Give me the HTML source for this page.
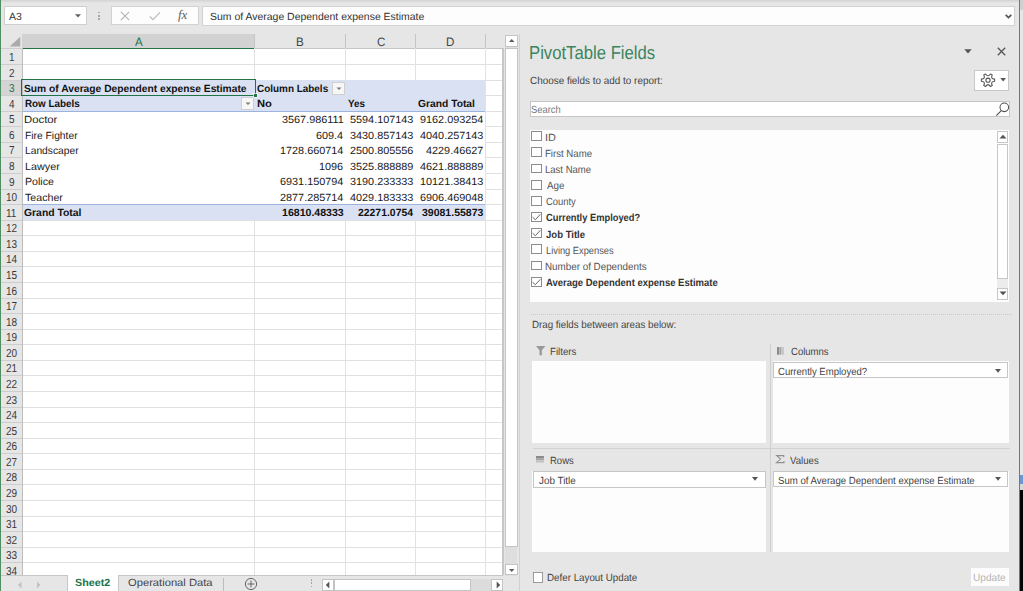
<!DOCTYPE html>
<html><head><meta charset="utf-8"><style>
html,body{margin:0;padding:0;}
body{width:1023px;height:591px;overflow:hidden;position:relative;background:#e6e6e6;font-family:"Liberation Sans", sans-serif;text-rendering:geometricPrecision;}
body>div{position:absolute;}
.t{white-space:nowrap;line-height:1em;transform-origin:0 0;}
</style></head><body>
<div style="left:0px;top:0px;width:1023px;height:3px;background:linear-gradient(#d2d2d2,#e6e6e6)"></div>
<div style="left:4.4px;top:6.3px;width:82.2px;height:18.9px;background:#fff;border:1px solid #cfcfcf;box-sizing:border-box"></div>
<div class="t" style="left:8.96px;top:13px;font-size:10.4px;transform:scaleX(1.0066);color:#333">A3</div>
<svg style="position:absolute;left:75px;top:14px;overflow:visible" width="6" height="4"><path d="M0 0.3H6L3 3.5Z" fill="#606060"/></svg>
<div style="left:98.3px;top:11.8px;width:1.6px;height:1.6px;background:#a6a6a6"></div>
<div style="left:98.3px;top:15.0px;width:1.6px;height:1.6px;background:#a6a6a6"></div>
<div style="left:98.3px;top:18.200000000000003px;width:1.6px;height:1.6px;background:#a6a6a6"></div>
<div style="left:111.2px;top:6.4px;width:88.1px;height:19.1px;background:#fdfdfd;border:1px solid #d2d2d2;box-sizing:border-box"></div>
<svg style="position:absolute;left:120px;top:11px;overflow:visible" width="10" height="10"><path d="M0.8 0.8L9.2 9.2M9.2 0.8L0.8 9.2" stroke="#b4b4b4" stroke-width="1.1"/></svg>
<svg style="position:absolute;left:149px;top:11px;overflow:visible" width="12" height="10"><path d="M0.8 5.5L4 8.6L11 1.4" stroke="#bcbcbc" stroke-width="1.3" fill="none"/></svg>
<div class="t" style="left:178px;top:8px;font-size:13px;font-family:'Liberation Serif',serif;font-style:italic;color:#606060;line-height:14px">fx</div>
<div style="left:201.5px;top:6.4px;width:813.3px;height:19.2px;background:#fdfdfd;border:1px solid #d2d2d2;box-sizing:border-box"></div>
<div class="t" style="left:210.34px;top:13px;font-size:10.4px;transform:scaleX(1.0063);color:#333">Sum of Average Dependent expense Estimate</div>
<svg style="position:absolute;left:1005px;top:13.5px;overflow:visible" width="7" height="5"><path d="M0.7 0.8L3.5 3.6L6.3 0.8" stroke="#555" stroke-width="1.7" fill="none"/></svg>
<div style="left:1020px;top:0px;width:3px;height:591px;background:#e6e6e6"></div>
<div style="left:1020px;top:0px;width:3px;height:10px;background:#cfcfcf"></div>
<div style="left:1020px;top:475px;width:3px;height:9px;background:#6b98d2"></div>
<div style="left:1020px;top:484px;width:3px;height:6px;background:#d8d8d8"></div>
<div style="left:1020px;top:490px;width:3px;height:101px;background:#050505"></div>
<div style="left:1019px;top:0px;width:1.2px;height:591px;background:#4f8d62"></div>
<div style="left:0px;top:0px;width:1.2px;height:591px;background:#4f8d62"></div>
<div style="left:22.3px;top:48.4px;width:480.7px;height:527.0px;background:#fff"></div>
<div style="left:1.2px;top:48.4px;width:21.1px;height:527.0px;background:#e6e6e6"></div>
<div style="left:1.2px;top:79.53999999999999px;width:21.1px;height:15.57px;background:#d4d4d4"></div>
<div style="left:22.3px;top:34px;width:480.7px;height:14.399999999999999px;background:#e6e6e6"></div>
<div style="left:22.3px;top:34px;width:232.29999999999998px;height:14.399999999999999px;background:#d2d2d2"></div>
<div style="left:254.1px;top:34px;width:1px;height:14.399999999999999px;background:#c4c4c4"></div>
<div style="left:344.8px;top:34px;width:1px;height:14.399999999999999px;background:#c4c4c4"></div>
<div style="left:415.0px;top:34px;width:1px;height:14.399999999999999px;background:#c4c4c4"></div>
<div style="left:484.9px;top:34px;width:1px;height:14.399999999999999px;background:#c4c4c4"></div>
<div style="left:1.2px;top:47.8px;width:21.1px;height:1px;background:#cdcdcd"></div>
<div style="left:254.6px;top:47.8px;width:248.4px;height:1px;background:#c4c4c4"></div>
<div style="left:22.3px;top:47.6px;width:232.29999999999998px;height:1.6px;background:#217346"></div>
<svg style="position:absolute;left:9px;top:36px;overflow:visible" width="12" height="11"><path d="M0.8 10.6H11.2V0.7Z" fill="#ababab"/></svg>
<div style="left:22.0px;top:48.4px;width:0.9px;height:527.0px;background:#bdbdbd"></div>
<div class="t" style="left:134.97px;top:36px;font-size:12.2px;transform:scaleX(0.9500);color:#217346">A</div>
<div class="t" style="left:296.32px;top:36px;font-size:12.2px;transform:scaleX(0.9500);color:#444">B</div>
<div class="t" style="left:376.57px;top:36px;font-size:12.2px;transform:scaleX(0.9500);color:#444">C</div>
<div class="t" style="left:446.47px;top:36px;font-size:12.2px;transform:scaleX(0.9500);color:#444">D</div>
<div style="left:1.2px;top:63.97px;width:21.1px;height:1px;background:#cdcdcd"></div>
<div style="left:22.9px;top:63.97px;width:480.1px;height:1px;background:#e0e0e0"></div>
<div style="left:1.2px;top:79.53999999999999px;width:21.1px;height:1px;background:#cdcdcd"></div>
<div style="left:22.9px;top:79.53999999999999px;width:480.1px;height:1px;background:#e0e0e0"></div>
<div style="left:1.2px;top:95.11px;width:21.1px;height:1px;background:#cdcdcd"></div>
<div style="left:22.9px;top:95.11px;width:480.1px;height:1px;background:#e0e0e0"></div>
<div style="left:1.2px;top:110.68px;width:21.1px;height:1px;background:#cdcdcd"></div>
<div style="left:22.9px;top:110.68px;width:480.1px;height:1px;background:#e0e0e0"></div>
<div style="left:1.2px;top:126.25px;width:21.1px;height:1px;background:#cdcdcd"></div>
<div style="left:22.9px;top:126.25px;width:480.1px;height:1px;background:#e0e0e0"></div>
<div style="left:1.2px;top:141.82px;width:21.1px;height:1px;background:#cdcdcd"></div>
<div style="left:22.9px;top:141.82px;width:480.1px;height:1px;background:#e0e0e0"></div>
<div style="left:1.2px;top:157.39000000000001px;width:21.1px;height:1px;background:#cdcdcd"></div>
<div style="left:22.9px;top:157.39000000000001px;width:480.1px;height:1px;background:#e0e0e0"></div>
<div style="left:1.2px;top:172.96px;width:21.1px;height:1px;background:#cdcdcd"></div>
<div style="left:22.9px;top:172.96px;width:480.1px;height:1px;background:#e0e0e0"></div>
<div style="left:1.2px;top:188.53px;width:21.1px;height:1px;background:#cdcdcd"></div>
<div style="left:22.9px;top:188.53px;width:480.1px;height:1px;background:#e0e0e0"></div>
<div style="left:1.2px;top:204.1px;width:21.1px;height:1px;background:#cdcdcd"></div>
<div style="left:22.9px;top:204.1px;width:480.1px;height:1px;background:#e0e0e0"></div>
<div style="left:1.2px;top:219.67000000000002px;width:21.1px;height:1px;background:#cdcdcd"></div>
<div style="left:22.9px;top:219.67000000000002px;width:480.1px;height:1px;background:#e0e0e0"></div>
<div style="left:1.2px;top:235.24px;width:21.1px;height:1px;background:#cdcdcd"></div>
<div style="left:22.9px;top:235.24px;width:480.1px;height:1px;background:#e0e0e0"></div>
<div style="left:1.2px;top:250.81px;width:21.1px;height:1px;background:#cdcdcd"></div>
<div style="left:22.9px;top:250.81px;width:480.1px;height:1px;background:#e0e0e0"></div>
<div style="left:1.2px;top:266.38px;width:21.1px;height:1px;background:#cdcdcd"></div>
<div style="left:22.9px;top:266.38px;width:480.1px;height:1px;background:#e0e0e0"></div>
<div style="left:1.2px;top:281.95px;width:21.1px;height:1px;background:#cdcdcd"></div>
<div style="left:22.9px;top:281.95px;width:480.1px;height:1px;background:#e0e0e0"></div>
<div style="left:1.2px;top:297.52px;width:21.1px;height:1px;background:#cdcdcd"></div>
<div style="left:22.9px;top:297.52px;width:480.1px;height:1px;background:#e0e0e0"></div>
<div style="left:1.2px;top:313.09px;width:21.1px;height:1px;background:#cdcdcd"></div>
<div style="left:22.9px;top:313.09px;width:480.1px;height:1px;background:#e0e0e0"></div>
<div style="left:1.2px;top:328.65999999999997px;width:21.1px;height:1px;background:#cdcdcd"></div>
<div style="left:22.9px;top:328.65999999999997px;width:480.1px;height:1px;background:#e0e0e0"></div>
<div style="left:1.2px;top:344.22999999999996px;width:21.1px;height:1px;background:#cdcdcd"></div>
<div style="left:22.9px;top:344.22999999999996px;width:480.1px;height:1px;background:#e0e0e0"></div>
<div style="left:1.2px;top:359.79999999999995px;width:21.1px;height:1px;background:#cdcdcd"></div>
<div style="left:22.9px;top:359.79999999999995px;width:480.1px;height:1px;background:#e0e0e0"></div>
<div style="left:1.2px;top:375.37px;width:21.1px;height:1px;background:#cdcdcd"></div>
<div style="left:22.9px;top:375.37px;width:480.1px;height:1px;background:#e0e0e0"></div>
<div style="left:1.2px;top:390.94px;width:21.1px;height:1px;background:#cdcdcd"></div>
<div style="left:22.9px;top:390.94px;width:480.1px;height:1px;background:#e0e0e0"></div>
<div style="left:1.2px;top:406.51px;width:21.1px;height:1px;background:#cdcdcd"></div>
<div style="left:22.9px;top:406.51px;width:480.1px;height:1px;background:#e0e0e0"></div>
<div style="left:1.2px;top:422.08px;width:21.1px;height:1px;background:#cdcdcd"></div>
<div style="left:22.9px;top:422.08px;width:480.1px;height:1px;background:#e0e0e0"></div>
<div style="left:1.2px;top:437.65px;width:21.1px;height:1px;background:#cdcdcd"></div>
<div style="left:22.9px;top:437.65px;width:480.1px;height:1px;background:#e0e0e0"></div>
<div style="left:1.2px;top:453.21999999999997px;width:21.1px;height:1px;background:#cdcdcd"></div>
<div style="left:22.9px;top:453.21999999999997px;width:480.1px;height:1px;background:#e0e0e0"></div>
<div style="left:1.2px;top:468.78999999999996px;width:21.1px;height:1px;background:#cdcdcd"></div>
<div style="left:22.9px;top:468.78999999999996px;width:480.1px;height:1px;background:#e0e0e0"></div>
<div style="left:1.2px;top:484.36px;width:21.1px;height:1px;background:#cdcdcd"></div>
<div style="left:22.9px;top:484.36px;width:480.1px;height:1px;background:#e0e0e0"></div>
<div style="left:1.2px;top:499.93px;width:21.1px;height:1px;background:#cdcdcd"></div>
<div style="left:22.9px;top:499.93px;width:480.1px;height:1px;background:#e0e0e0"></div>
<div style="left:1.2px;top:515.5px;width:21.1px;height:1px;background:#cdcdcd"></div>
<div style="left:22.9px;top:515.5px;width:480.1px;height:1px;background:#e0e0e0"></div>
<div style="left:1.2px;top:531.07px;width:21.1px;height:1px;background:#cdcdcd"></div>
<div style="left:22.9px;top:531.07px;width:480.1px;height:1px;background:#e0e0e0"></div>
<div style="left:1.2px;top:546.64px;width:21.1px;height:1px;background:#cdcdcd"></div>
<div style="left:22.9px;top:546.64px;width:480.1px;height:1px;background:#e0e0e0"></div>
<div style="left:1.2px;top:562.21px;width:21.1px;height:1px;background:#cdcdcd"></div>
<div style="left:22.9px;top:562.21px;width:480.1px;height:1px;background:#e0e0e0"></div>
<div style="left:254.1px;top:48.4px;width:1px;height:527.0px;background:#e2e2e2"></div>
<div style="left:344.8px;top:48.4px;width:1px;height:527.0px;background:#e2e2e2"></div>
<div style="left:415.0px;top:48.4px;width:1px;height:527.0px;background:#e2e2e2"></div>
<div style="left:484.9px;top:48.4px;width:1px;height:527.0px;background:#e2e2e2"></div>
<div style="left:502.3px;top:48.4px;width:1.6px;height:527.0px;background:#c6c6c6"></div>
<div class="t" style="left:8.81px;top:52px;font-size:11.6px;transform:scaleX(0.8600);color:#383838">1</div>
<div class="t" style="left:8.93px;top:68px;font-size:11.6px;transform:scaleX(0.8600);color:#383838">2</div>
<div class="t" style="left:8.96px;top:83px;font-size:11.6px;transform:scaleX(0.8600);color:#217346">3</div>
<div class="t" style="left:8.96px;top:99px;font-size:11.6px;transform:scaleX(0.8600);color:#383838">4</div>
<div class="t" style="left:8.93px;top:114px;font-size:11.6px;transform:scaleX(0.8600);color:#383838">5</div>
<div class="t" style="left:8.91px;top:130px;font-size:11.6px;transform:scaleX(0.8600);color:#383838">6</div>
<div class="t" style="left:8.93px;top:145px;font-size:11.6px;transform:scaleX(0.8600);color:#383838">7</div>
<div class="t" style="left:8.91px;top:161px;font-size:11.6px;transform:scaleX(0.8600);color:#383838">8</div>
<div class="t" style="left:8.93px;top:177px;font-size:11.6px;transform:scaleX(0.8600);color:#383838">9</div>
<div class="t" style="left:5.99px;top:192px;font-size:11.6px;transform:scaleX(0.8600);color:#383838">10</div>
<div class="t" style="left:6.41px;top:208px;font-size:11.6px;transform:scaleX(0.8600);color:#383838">11</div>
<div class="t" style="left:6.04px;top:223px;font-size:11.6px;transform:scaleX(0.8600);color:#383838">12</div>
<div class="t" style="left:6.01px;top:239px;font-size:11.6px;transform:scaleX(0.8600);color:#383838">13</div>
<div class="t" style="left:5.94px;top:254px;font-size:11.6px;transform:scaleX(0.8600);color:#383838">14</div>
<div class="t" style="left:5.99px;top:270px;font-size:11.6px;transform:scaleX(0.8600);color:#383838">15</div>
<div class="t" style="left:6.01px;top:286px;font-size:11.6px;transform:scaleX(0.8600);color:#383838">16</div>
<div class="t" style="left:6.04px;top:301px;font-size:11.6px;transform:scaleX(0.8600);color:#383838">17</div>
<div class="t" style="left:5.99px;top:317px;font-size:11.6px;transform:scaleX(0.8600);color:#383838">18</div>
<div class="t" style="left:6.01px;top:332px;font-size:11.6px;transform:scaleX(0.8600);color:#383838">19</div>
<div class="t" style="left:6.11px;top:348px;font-size:11.6px;transform:scaleX(0.8600);color:#383838">20</div>
<div class="t" style="left:6.16px;top:363px;font-size:11.6px;transform:scaleX(0.8600);color:#383838">21</div>
<div class="t" style="left:6.16px;top:379px;font-size:11.6px;transform:scaleX(0.8600);color:#383838">22</div>
<div class="t" style="left:6.14px;top:395px;font-size:11.6px;transform:scaleX(0.8600);color:#383838">23</div>
<div class="t" style="left:6.06px;top:410px;font-size:11.6px;transform:scaleX(0.8600);color:#383838">24</div>
<div class="t" style="left:6.11px;top:426px;font-size:11.6px;transform:scaleX(0.8600);color:#383838">25</div>
<div class="t" style="left:6.14px;top:441px;font-size:11.6px;transform:scaleX(0.8600);color:#383838">26</div>
<div class="t" style="left:6.16px;top:457px;font-size:11.6px;transform:scaleX(0.8600);color:#383838">27</div>
<div class="t" style="left:6.11px;top:472px;font-size:11.6px;transform:scaleX(0.8600);color:#383838">28</div>
<div class="t" style="left:6.14px;top:488px;font-size:11.6px;transform:scaleX(0.8600);color:#383838">29</div>
<div class="t" style="left:6.16px;top:504px;font-size:11.6px;transform:scaleX(0.8600);color:#383838">30</div>
<div class="t" style="left:6.21px;top:519px;font-size:11.6px;transform:scaleX(0.8600);color:#383838">31</div>
<div class="t" style="left:6.21px;top:535px;font-size:11.6px;transform:scaleX(0.8600);color:#383838">32</div>
<div class="t" style="left:6.19px;top:550px;font-size:11.6px;transform:scaleX(0.8600);color:#383838">33</div>
<div class="t" style="left:6.11px;top:566px;font-size:11.6px;transform:scaleX(0.8600);color:#383838">34</div>
<div style="left:22.9px;top:79.53999999999999px;width:462.5px;height:31.14px;background:#d9e1f2"></div>
<div style="left:22.9px;top:110.68px;width:462.5px;height:93.42px;background:#fff"></div>
<div style="left:22.9px;top:204.1px;width:462.5px;height:15.57px;background:#d9e1f2"></div>
<div style="left:22.9px;top:110.78px;width:462.5px;height:1px;background:#9bb3dd"></div>
<div style="left:22.9px;top:204.0px;width:462.5px;height:1px;background:#9bb3dd"></div>
<div class="t" style="left:24.40px;top:85px;font-size:10.4px;transform:scaleX(0.9865);font-weight:bold;color:#111">Sum of Average Dependent expense Estimate</div>
<div class="t" style="left:257.20px;top:85px;font-size:10.4px;transform:scaleX(0.9554);font-weight:bold;color:#111">Column Labels</div>
<div class="t" style="left:24.71px;top:100px;font-size:10.4px;transform:scaleX(0.9470);font-weight:bold;color:#111">Row Labels</div>
<div class="t" style="left:256.69px;top:100px;font-size:10.4px;transform:scaleX(1.0774);font-weight:bold;color:#111">No</div>
<div class="t" style="left:347.55px;top:100px;font-size:10.4px;transform:scaleX(0.9497);font-weight:bold;color:#111">Yes</div>
<div class="t" style="left:417.83px;top:100px;font-size:10.4px;transform:scaleX(0.9899);font-weight:bold;color:#111">Grand Total</div>
<div class="t" style="left:24.49px;top:116px;font-size:10.4px;transform:scaleX(1.0901);color:#1a1a1a">Doctor</div>
<div class="t" style="left:281.57px;top:116px;font-size:10.4px;transform:scaleX(1.0440);color:#1a1a1a">3567.986111</div>
<div class="t" style="left:350.08px;top:116px;font-size:10.4px;transform:scaleX(1.0440);color:#1a1a1a">5594.107143</div>
<div class="t" style="left:419.72px;top:116px;font-size:10.4px;transform:scaleX(1.0440);color:#1a1a1a">9162.093254</div>
<div class="t" style="left:24.78px;top:132px;font-size:10.4px;transform:scaleX(0.9897);color:#1a1a1a">Fire Fighter</div>
<div class="t" style="left:315.98px;top:132px;font-size:10.4px;transform:scaleX(1.0440);color:#1a1a1a">609.4</div>
<div class="t" style="left:350.08px;top:132px;font-size:10.4px;transform:scaleX(1.0440);color:#1a1a1a">3430.857143</div>
<div class="t" style="left:419.88px;top:132px;font-size:10.4px;transform:scaleX(1.0440);color:#1a1a1a">4040.257143</div>
<div class="t" style="left:24.79px;top:147px;font-size:10.4px;transform:scaleX(0.9861);color:#1a1a1a">Landscaper</div>
<div class="t" style="left:279.72px;top:147px;font-size:10.4px;transform:scaleX(1.0440);color:#1a1a1a">1728.660714</div>
<div class="t" style="left:350.08px;top:147px;font-size:10.4px;transform:scaleX(1.0440);color:#1a1a1a">2500.805556</div>
<div class="t" style="left:426.02px;top:147px;font-size:10.4px;transform:scaleX(1.0440);color:#1a1a1a">4229.46627</div>
<div class="t" style="left:24.59px;top:163px;font-size:10.4px;transform:scaleX(1.0382);color:#1a1a1a">Lawyer</div>
<div class="t" style="left:319.13px;top:163px;font-size:10.4px;transform:scaleX(1.0440);color:#1a1a1a">1096</div>
<div class="t" style="left:350.08px;top:163px;font-size:10.4px;transform:scaleX(1.0440);color:#1a1a1a">3525.888889</div>
<div class="t" style="left:419.88px;top:163px;font-size:10.4px;transform:scaleX(1.0440);color:#1a1a1a">4621.888889</div>
<div class="t" style="left:24.58px;top:178px;font-size:10.4px;transform:scaleX(1.0205);color:#1a1a1a">Police</div>
<div class="t" style="left:279.72px;top:178px;font-size:10.4px;transform:scaleX(1.0440);color:#1a1a1a">6931.150794</div>
<div class="t" style="left:350.08px;top:178px;font-size:10.4px;transform:scaleX(1.0440);color:#1a1a1a">3190.233333</div>
<div class="t" style="left:419.88px;top:178px;font-size:10.4px;transform:scaleX(1.0440);color:#1a1a1a">10121.38413</div>
<div class="t" style="left:25.02px;top:194px;font-size:10.4px;transform:scaleX(1.0254);color:#1a1a1a">Teacher</div>
<div class="t" style="left:279.72px;top:194px;font-size:10.4px;transform:scaleX(1.0440);color:#1a1a1a">2877.285714</div>
<div class="t" style="left:350.08px;top:194px;font-size:10.4px;transform:scaleX(1.0440);color:#1a1a1a">4029.183333</div>
<div class="t" style="left:419.83px;top:194px;font-size:10.4px;transform:scaleX(1.0440);color:#1a1a1a">6906.469048</div>
<div class="t" style="left:24.37px;top:209px;font-size:10.4px;transform:scaleX(0.9988);font-weight:bold;color:#111">Grand Total</div>
<div class="t" style="left:281.76px;top:209px;font-size:10.4px;transform:scaleX(1.0177);font-weight:bold;color:#111">16810.48333</div>
<div class="t" style="left:357.76px;top:209px;font-size:10.4px;transform:scaleX(1.0018);font-weight:bold;color:#111">22271.0754</div>
<div class="t" style="left:422.01px;top:209px;font-size:10.4px;transform:scaleX(1.0111);font-weight:bold;color:#111">39081.55873</div>
<div style="left:332px;top:81.8px;width:13px;height:12.8px;background:#f7f7f7;border:1px solid #d0d0d0;box-sizing:border-box"></div>
<svg style="position:absolute;left:335.5px;top:86.7px;overflow:visible" width="6" height="4"><path d="M0.5 0.5H5.5L3 3Z" fill="#7a7a7a"/></svg>
<div style="left:241.3px;top:96.8px;width:12.9px;height:13.0px;background:#f7f7f7;border:1px solid #d0d0d0;box-sizing:border-box"></div>
<svg style="position:absolute;left:244.75px;top:101.8px;overflow:visible" width="6" height="4"><path d="M0.5 0.5H5.5L3 3Z" fill="#7a7a7a"/></svg>
<div style="left:21.4px;top:78.7px;width:234.8px;height:17.6px;border:1.6px solid #217346;box-sizing:border-box"></div>
<div style="left:253.5px;top:94px;width:3.2px;height:3.2px;background:#217346;box-shadow:0 0 0 0.6px #fff"></div>
<div style="left:505.4px;top:34.5px;width:12px;height:541px;background:#dedede"></div>
<div style="left:505.2px;top:35.3px;width:12.5px;height:11.5px;background:#fff;border:1px solid #c4c4c4;box-sizing:border-box"></div>
<svg style="position:absolute;left:508.8px;top:39px;overflow:visible" width="6" height="4"><path d="M0 3H5.4L2.7 0Z" fill="#5a5a5a"/></svg>
<div style="left:505.2px;top:47.8px;width:12.5px;height:499.6px;background:#fff;border:1px solid #c4c4c4;box-sizing:border-box"></div>
<div style="left:505.2px;top:564.2px;width:12.5px;height:11.3px;background:#fff;border:1px solid #c4c4c4;box-sizing:border-box"></div>
<svg style="position:absolute;left:508.8px;top:568.5px;overflow:visible" width="6" height="4"><path d="M0 0H5.4L2.7 3Z" fill="#5a5a5a"/></svg>
<div style="left:518.6px;top:34px;width:1.2px;height:557px;background:#d2d2d2"></div>
<div style="left:1.2px;top:575.4px;width:503px;height:15.600000000000023px;background:#e6e6e6"></div>
<div style="left:1.2px;top:575.0px;width:65.9px;height:1px;background:#c6c6c6"></div>
<svg style="position:absolute;left:17px;top:581px;overflow:visible" width="6" height="8"><path d="M4.5 0.5L1 4L4.5 7.5Z" fill="#c2c2c2"/></svg>
<svg style="position:absolute;left:36px;top:581px;overflow:visible" width="6" height="8"><path d="M1 0.5L4.5 4L1 7.5Z" fill="#c2c2c2"/></svg>
<div style="left:66.9px;top:575.4px;width:51.5px;height:16px;background:#fff;border-left:1px solid #c6c6c6;box-sizing:border-box"></div>
<div class="t" style="left:75.30px;top:579px;font-size:10.4px;transform:scaleX(1.0331);font-weight:bold;color:#217346">Sheet2</div>
<div style="left:118.2px;top:575.0px;width:385px;height:1px;background:#c6c6c6"></div>
<div style="left:118.2px;top:575.0px;width:1px;height:16px;background:#c6c6c6"></div>
<div class="t" style="left:128.44px;top:579px;font-size:10.4px;transform:scaleX(1.0760);color:#444">Operational Data</div>
<div style="left:223.3px;top:578px;width:1px;height:13px;background:#bdbdbd"></div>
<svg style="position:absolute;left:244px;top:577px;overflow:visible" width="14" height="14"><circle cx="7" cy="7" r="5.6" stroke="#666" stroke-width="1" fill="none"/><path d="M7 3.6V10.4M3.6 7H10.4" stroke="#666" stroke-width="1"/></svg>
<div style="left:310.5px;top:579.3px;width:1.6px;height:1.6px;background:#a4a4a4"></div>
<div style="left:310.5px;top:582.4px;width:1.6px;height:1.6px;background:#a4a4a4"></div>
<div style="left:310.5px;top:585.5px;width:1.6px;height:1.6px;background:#a4a4a4"></div>
<div style="left:321.8px;top:578.8px;width:12.2px;height:12.2px;background:#fff;border:1px solid #c4c4c4;box-sizing:border-box"></div>
<svg style="position:absolute;left:325.3px;top:581px;overflow:visible" width="5" height="8"><path d="M4.3 0.5V7.5L0.8 4Z" fill="#555"/></svg>
<div style="left:333.8px;top:578.8px;width:137px;height:12.2px;background:#fff;border:1px solid #c4c4c4;box-sizing:border-box"></div>
<div style="left:470.8px;top:578.8px;width:20.6px;height:12.2px;background:#dcdcdc"></div>
<div style="left:491.3px;top:578.8px;width:12px;height:12.2px;background:#fff;border:1px solid #c4c4c4;box-sizing:border-box"></div>
<svg style="position:absolute;left:495.5px;top:581px;overflow:visible" width="5" height="8"><path d="M0.7 0.5V7.5L4.2 4Z" fill="#555"/></svg>
<div class="t" style="left:529.23px;top:44px;font-size:18.8px;transform:scaleX(0.8885);color:#3a8560">PivotTable Fields</div>
<div class="t" style="left:530.48px;top:77px;font-size:10.4px;transform:scaleX(0.9536);color:#444">Choose fields to add to report:</div>
<svg style="position:absolute;left:963.5px;top:48.5px;overflow:visible" width="8" height="5"><path d="M0.3 0.3H7.7L4 4.6Z" fill="#555"/></svg>
<svg style="position:absolute;left:996.5px;top:47px;overflow:visible" width="9" height="9"><path d="M0.8 0.8L8.2 8.2M8.2 0.8L0.8 8.2" stroke="#555" stroke-width="1.3"/></svg>
<div style="left:974.3px;top:70.3px;width:35.1px;height:21px;background:#fff;border:1px solid #c8c8c8;box-sizing:border-box"></div>
<svg style="position:absolute;left:0px;top:0px;overflow:visible" width="1" height="1"><path d="M994.62 79.15 L994.62 81.25 Q990.25 81.50 992.22 85.41 L990.40 86.45 Q988.00 82.80 985.60 86.45 L983.78 85.41 Q985.75 81.50 981.38 81.25 L981.38 79.15 Q985.75 78.90 983.78 74.99 L985.60 73.95 Q988.00 77.60 990.40 73.95 L992.22 74.99 Q990.25 78.90 994.62 79.15 Z" stroke="#555" stroke-width="1.1" fill="none" stroke-linejoin="round"/><circle cx="988" cy="80.2" r="2.1" stroke="#555" stroke-width="1.1" fill="none"/><path d="M1000.3 78H1006L1003.15 81.4Z" fill="#555"/></svg>
<div style="left:530.4px;top:101.3px;width:479.2px;height:16.1px;background:#fff;border:1px solid #c6c6c6;box-sizing:border-box"></div>
<div class="t" style="left:530.89px;top:106px;font-size:10.4px;transform:scaleX(0.8999);color:#777">Search</div>
<svg style="position:absolute;left:0px;top:0px;overflow:visible" width="1" height="1"><circle cx="1004.3" cy="107.3" r="4.3" stroke="#505050" stroke-width="1.05" fill="none"/><path d="M1001.3 110.6L996.3 115.6" stroke="#505050" stroke-width="1.15"/></svg>
<div style="left:530.4px;top:130px;width:478.9px;height:172px;background:#fdfdfd"></div>
<div style="left:531.1px;top:131.30px;width:10.9px;height:9.9px;background:#fff;border:1px solid #8c8c8c;box-sizing:border-box"></div>
<div class="t" style="left:545.13px;top:134px;font-size:10.4px;transform:scaleX(1.0489);color:#555">ID</div>
<div style="left:531.1px;top:147.45px;width:10.9px;height:9.9px;background:#fff;border:1px solid #8c8c8c;box-sizing:border-box"></div>
<div class="t" style="left:545.48px;top:150px;font-size:10.4px;transform:scaleX(0.9255);color:#555">First Name</div>
<div style="left:531.1px;top:163.60px;width:10.9px;height:9.9px;background:#fff;border:1px solid #8c8c8c;box-sizing:border-box"></div>
<div class="t" style="left:545.49px;top:166px;font-size:10.4px;transform:scaleX(0.9171);color:#555">Last Name</div>
<div style="left:531.1px;top:179.75px;width:10.9px;height:9.9px;background:#fff;border:1px solid #8c8c8c;box-sizing:border-box"></div>
<div class="t" style="left:546.55px;top:182px;font-size:10.4px;transform:scaleX(0.9473);color:#555">Age</div>
<div style="left:531.1px;top:195.90px;width:10.9px;height:9.9px;background:#fff;border:1px solid #8c8c8c;box-sizing:border-box"></div>
<div class="t" style="left:546.05px;top:198px;font-size:10.4px;transform:scaleX(0.9053);color:#555">County</div>
<div style="left:531.1px;top:212.05px;width:10.9px;height:9.9px;background:#fff;border:1px solid #8c8c8c;box-sizing:border-box"></div>
<svg style="position:absolute;left:531.1px;top:212.05px;overflow:visible" width="11" height="10"><path d="M1.6 5.2L4.3 7.7L9.4 2.3" stroke="#666" stroke-width="1" fill="none"/></svg>
<div class="t" style="left:546.18px;top:214px;font-size:10.4px;transform:scaleX(0.8957);font-weight:bold;color:#333">Currently Employed?</div>
<div style="left:531.1px;top:228.20px;width:10.9px;height:9.9px;background:#fff;border:1px solid #8c8c8c;box-sizing:border-box"></div>
<svg style="position:absolute;left:531.1px;top:228.2px;overflow:visible" width="11" height="10"><path d="M1.6 5.2L4.3 7.7L9.4 2.3" stroke="#666" stroke-width="1" fill="none"/></svg>
<div class="t" style="left:546.46px;top:231px;font-size:10.4px;transform:scaleX(0.9188);font-weight:bold;color:#333">Job Title</div>
<div style="left:531.1px;top:244.35px;width:10.9px;height:9.9px;background:#fff;border:1px solid #8c8c8c;box-sizing:border-box"></div>
<div class="t" style="left:545.51px;top:247px;font-size:10.4px;transform:scaleX(0.8941);color:#555">Living Expenses</div>
<div style="left:531.1px;top:260.50px;width:10.9px;height:9.9px;background:#fff;border:1px solid #8c8c8c;box-sizing:border-box"></div>
<div class="t" style="left:545.43px;top:263px;font-size:10.4px;transform:scaleX(0.9453);color:#555">Number of Dependents</div>
<div style="left:531.1px;top:276.65px;width:10.9px;height:9.9px;background:#fff;border:1px solid #8c8c8c;box-sizing:border-box"></div>
<svg style="position:absolute;left:531.1px;top:276.65px;overflow:visible" width="11" height="10"><path d="M1.6 5.2L4.3 7.7L9.4 2.3" stroke="#666" stroke-width="1" fill="none"/></svg>
<div class="t" style="left:546.32px;top:279px;font-size:10.4px;transform:scaleX(0.9139);font-weight:bold;color:#333">Average Dependent expense Estimate</div>
<div style="left:996.7px;top:131.3px;width:11.5px;height:11.7px;background:#fff;border:1px solid #c6c6c6;box-sizing:border-box"></div>
<svg style="position:absolute;left:999px;top:134px;overflow:visible" width="8" height="5"><path d="M0.5 4.5H7.5L4 0.8Z" fill="#555"/></svg>
<div style="left:996.7px;top:143.5px;width:11.5px;height:135px;background:#fff;border:1px solid #c6c6c6;box-sizing:border-box"></div>
<div style="left:996.7px;top:278.5px;width:11.5px;height:9px;background:#ececec"></div>
<div style="left:996.7px;top:287.5px;width:11.5px;height:12px;background:#fff;border:1px solid #c6c6c6;box-sizing:border-box"></div>
<svg style="position:absolute;left:999px;top:291px;overflow:visible" width="8" height="5"><path d="M0.5 0.5H7.5L4 4.2Z" fill="#555"/></svg>
<div style="left:530.8px;top:313.9px;width:481px;height:0;border-top:1px dotted #c8c8c8"></div>
<div class="t" style="left:532.45px;top:321px;font-size:10.4px;transform:scaleX(0.9390);color:#444">Drag fields between areas below:</div>
<svg style="position:absolute;left:535.7px;top:345.9px;overflow:visible" width="10" height="10"><path d="M0 0H9.4L5.9 4.2V9.2H3.5V4.2Z" fill="#999"/></svg>
<div class="t" style="left:550.23px;top:348px;font-size:10.4px;transform:scaleX(0.9297);color:#444">Filters</div>
<div style="left:532.3px;top:360.9px;width:234px;height:82px;background:#fdfdfd"></div>
<div style="left:770px;top:344px;width:1.2px;height:208px;background:#cfcfcf"></div>
<svg style="position:absolute;left:777px;top:346.7px;overflow:visible" width="8" height="8"><rect x="0" y="0" width="2" height="7.7" fill="#8a8a8a"/><rect x="2.4" y="0" width="2" height="7.7" fill="#a4a4a4"/><rect x="4.8" y="0" width="2" height="7.7" fill="#c4c4c4"/></svg>
<div class="t" style="left:790.50px;top:348px;font-size:10.4px;transform:scaleX(0.9165);color:#444">Columns</div>
<div style="left:773px;top:360.9px;width:236px;height:82px;background:#fdfdfd"></div>
<div style="left:773.1px;top:362.3px;width:235.3px;height:16.2px;background:#fff;border:1px solid #c6c6c6;box-sizing:border-box"></div>
<div class="t" style="left:778.32px;top:368px;font-size:10.4px;transform:scaleX(0.9180);color:#444">Currently Employed?</div>
<svg style="position:absolute;left:995.2px;top:368.5px;overflow:visible" width="6" height="4"><path d="M0 0H6L3 3.8Z" fill="#555"/></svg>
<div style="left:532.8px;top:447.8px;width:477px;height:1.2px;background:#d2d2d2"></div>
<svg style="position:absolute;left:536.2px;top:456.2px;overflow:visible" width="8" height="7"><rect x="0" y="0" width="7.9" height="2.2" fill="#8a8a8a"/><rect x="0" y="2.2" width="7.9" height="2.2" fill="#a4a4a4"/><rect x="0" y="4.4" width="7.9" height="2.2" fill="#c4c4c4"/></svg>
<div class="t" style="left:549.93px;top:457px;font-size:10.4px;transform:scaleX(0.9152);color:#444">Rows</div>
<div style="left:532.3px;top:470.5px;width:234px;height:81.4px;background:#fdfdfd"></div>
<div style="left:533px;top:471px;width:233px;height:16.6px;background:#fff;border:1px solid #c6c6c6;box-sizing:border-box"></div>
<div class="t" style="left:538.96px;top:477px;font-size:10.4px;transform:scaleX(0.9494);color:#444">Job Title</div>
<svg style="position:absolute;left:751.5px;top:477.4px;overflow:visible" width="6" height="4"><path d="M0 0H6L3 3.8Z" fill="#555"/></svg>
<svg style="position:absolute;left:0px;top:0px;overflow:visible" width="1" height="1"><path d="M783.8 457.2V455.6H776.6L780.6 459.1L776.4 462.6H784V460.9" stroke="#8f8f8f" stroke-width="1.05" fill="none" stroke-linejoin="miter"/></svg>
<div class="t" style="left:790.11px;top:457px;font-size:10.4px;transform:scaleX(0.9276);color:#444">Values</div>
<div style="left:773px;top:470.5px;width:236px;height:81.4px;background:#fdfdfd"></div>
<div style="left:773.1px;top:471px;width:235.3px;height:16.4px;background:#fff;border:1px solid #c6c6c6;box-sizing:border-box"></div>
<div class="t" style="left:778.27px;top:477px;font-size:10.4px;transform:scaleX(0.9237);color:#444">Sum of Average Dependent expense Estimate</div>
<svg style="position:absolute;left:995.2px;top:477.4px;overflow:visible" width="6" height="4"><path d="M0 0H6L3 3.8Z" fill="#555"/></svg>
<div style="left:532.5px;top:572.3px;width:10.2px;height:10.3px;background:#fff;border:1px solid #9a9a9a;box-sizing:border-box"></div>
<div class="t" style="left:547.05px;top:574px;font-size:10.4px;transform:scaleX(0.9410);color:#444">Defer Layout Update</div>
<div style="left:970.8px;top:568.2px;width:37.8px;height:18px;background:#fcfcfc"></div>
<div class="t" style="left:973.04px;top:574px;font-size:10.4px;transform:scaleX(0.9724);color:#b4b4b4">Update</div>
</body></html>
